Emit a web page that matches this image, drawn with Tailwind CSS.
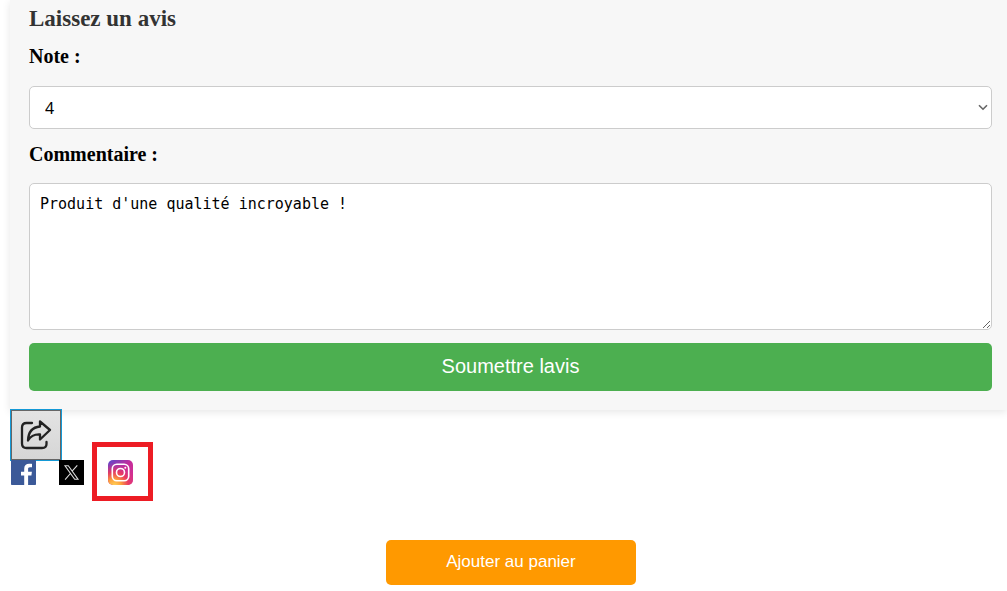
<!DOCTYPE html>
<html lang="fr">
<head>
<meta charset="utf-8">
<meta name="viewport" content="width=device-width, initial-scale=1">
<title>Laissez un avis</title>
<script src="https://cdn.jsdelivr.net/npm/@tailwindcss/browser@4"></script>
</head>
<body class="bg-white overflow-x-hidden text-black">
<main class="pl-[10px]">
  <form class="flex flex-col bg-[#f7f7f7] pl-[19px] pr-[15px] pt-1 pb-[19px] shadow-[0_2px_8px_rgba(0,0,0,0.1)]">
    <h2 class="font-['Liberation_Serif',serif] text-[23px] leading-[30px] font-bold text-[#333333]">Laissez un avis</h2>
    <label for="note" class="mt-2 font-['Liberation_Serif',serif] text-[20px] leading-7 font-bold">Note :</label>
    <div class="relative mt-4">
      <select id="note" class="block w-full h-[43px] appearance-none rounded-[5px] border border-[#cccccc] bg-white px-[15px] font-['Noto_Sans',sans-serif] text-base leading-6">
        <option>1</option><option>2</option><option>3</option><option selected>4</option><option>5</option>
      </select>
      <svg class="pointer-events-none absolute right-1 top-[18px] w-[10px] h-[7px]" viewBox="0 0 10 7" fill="none" stroke="#666" stroke-width="1.6" aria-hidden="true"><path d="M1 1.2L5 5.2L9 1.2"/></svg>
    </div>
    <label for="commentaire" class="mt-[11px] font-['Liberation_Serif',serif] text-[20px] leading-7 font-bold">Commentaire :</label>
    <textarea id="commentaire" class="mt-[15px] block w-full h-[147px] rounded-[5px] border border-[#cccccc] bg-white p-[10px] font-['DejaVu_Sans_Mono',monospace] text-[15px] leading-5">Produit d'une qualité incroyable !</textarea>
    <button type="submit" class="mt-[13px] h-12 w-full rounded-[5px] bg-[#4caf50] pb-[2px] font-['Liberation_Sans',sans-serif] text-xl text-white">Soumettre lavis</button>
  </form>

  <section class="relative -mt-px" aria-label="Partager">
    <button type="button" aria-label="Partager" class="flex size-[52px] items-center justify-center border border-[#1499d6] bg-[#666]">
      <span class="flex size-12 items-center justify-center bg-linear-to-b from-[#e3e3e3] to-[#d6d6d6]">
        <svg class="size-8" viewBox="0 0 32 32" fill="none" stroke="#222" stroke-width="2.3" stroke-linecap="round" stroke-linejoin="round" aria-hidden="true">
          <path d="M12 4H6.500Q2 4 2 8.500V24.500Q2 29 6.500 29H22Q26.500 29 26.500 25V23"/>
          <path d="M20 2.500L30 11L20 20.500V15.500Q12 15 8 21.500Q8.500 8.500 20 7.500Z"/>
        </svg>
      </span>
    </button>
    <div class="-mt-[19px] flex items-center">
      <a href="#" aria-label="Facebook" class="ml-px pt-[2px]">
        <svg class="size-[25px]" viewBox="0 0 25 25" aria-hidden="true"><rect width="25" height="25" rx=".8" fill="#3b5998"/><path fill="#fff" d="M13.200 25V15.500H10V11.700h3.200V8.700c0-3.200 2-4.900 4.900-4.900 1.400 0 2.500.1 2.900.15v3.300h-2c-1.600 0-1.900.75-1.900 1.850v2.600h3.800l-.5 3.800h-3.300V25Z"/></svg>
      </a>
      <a href="#" aria-label="X" class="ml-[23px] pt-[2px]">
        <svg class="size-[25px]" viewBox="0 0 25 25" aria-hidden="true"><rect width="25" height="25"/><path fill="none" stroke="#ddd" stroke-width="1.1" d="M6 5.700H9.300L19 19.300H15.700ZM18.300 5.300L13.100 11.100M11.400 13.500L6.100 19.600"/></svg>
      </a>
      <a href="#" aria-label="Instagram" class="ml-2 flex h-[59px] w-[61px] items-center border-[5px] border-[#ed1c24] pt-[2px] pl-[11px]">
        <svg class="size-[25px]" viewBox="0 0 25 25" aria-hidden="true">
          <defs>
            <linearGradient id="igBase" x1="0" y1="0" x2="1" y2="1"><stop stop-color="#5a48cc"/><stop offset=".5" stop-color="#c52c9b"/><stop offset="1" stop-color="#d83390"/></linearGradient>
            <radialGradient id="igWarm" cx=".25" cy="1.05" r=".95"><stop stop-color="#ffd85c"/><stop offset=".3" stop-color="#fda03c"/><stop offset=".6" stop-color="#ee3e55" stop-opacity=".85"/><stop offset="1" stop-color="#d62d8c" stop-opacity="0"/></radialGradient>
          </defs>
          <rect width="25" height="25" rx="5" fill="url(#igBase)"/><rect width="25" height="25" rx="5" fill="url(#igWarm)"/>
          <g fill="none" stroke="#fff" stroke-width="1.600"><rect x="4.300" y="4.300" width="16.400" height="16.400" rx="4.500"/><circle cx="12.500" cy="12.500" r="4"/></g><circle cx="17.300" cy="7.700" r="1" fill="#fff"/>
        </svg>
      </a>
    </div>
  </section>

  <div class="mt-[39px] flex justify-center pl-[5px]">
    <button type="button" class="h-[45px] w-[250px] rounded-[5px] bg-[#ff9900] pb-[2px] font-['Liberation_Sans',sans-serif] text-[17px] text-white">Ajouter au panier</button>
  </div>
</main>
</body>
</html>
